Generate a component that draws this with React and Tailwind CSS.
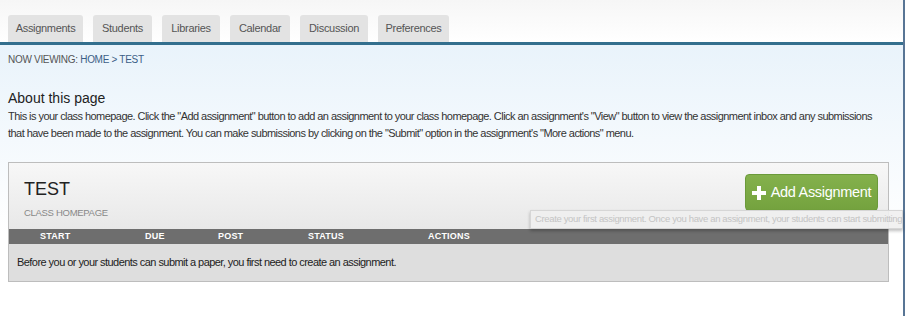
export default function App() {
  const tabs = [
    { label: "Assignments", w: "w-[75px]" },
    { label: "Students", w: "w-[59px]" },
    { label: "Libraries", w: "w-[58px]" },
    { label: "Calendar", w: "w-[60px]" },
    { label: "Discussion", w: "w-[68px]" },
    { label: "Preferences", w: "w-[71px]" },
  ];

  return (
    <div className="w-[908px] h-[316px] flex overflow-hidden bg-white font-['Liberation_Sans',Arial,sans-serif]">
      <div className="w-[903px] flex flex-col">
        {/* tab bar */}
        <div className="h-[45px] pt-[15px] flex items-end bg-gradient-to-b from-[#f6f6f6] to-white border-b-[3px] border-[#336f8e]">
          <div className="flex gap-[10px] pl-[8px] h-[27px]">
            {tabs.map((t) => (
              <div
                key={t.label}
                className={`${t.w} h-full flex items-center justify-center rounded-t-[3px] bg-[#e3e3e3] text-[11px] text-[#555] tracking-[-0.3px]`}
              >
                {t.label}
              </div>
            ))}
          </div>
        </div>

        {/* page body */}
        <div className="flex-1 bg-gradient-to-b from-[#e9f3fb] via-white via-70% to-white px-[8px]">
          <div className="h-[29px] flex items-center text-[10px] text-[#555] tracking-[-0.3px]">
            NOW VIEWING:&nbsp;<span className="text-[#3b5e86]">HOME &gt; TEST</span>
          </div>
          <h2 className="mt-[15px] text-[14px] leading-[18px] text-[#222]">About this page</h2>
          <p className="mt-[1px] text-[11px] leading-[17px] text-[#333] tracking-[-0.55px] pr-[20px]">
            This is your class homepage. Click the "Add assignment" button to add an assignment to your class homepage. Click an assignment's "View" button to view the assignment inbox and any submissions that have been made to the assignment. You can make submissions by clicking on the "Submit" option in the assignment's "More actions" menu.
          </p>

          {/* class panel */}
          <div className="relative mt-[20px] w-[881px] border border-[#bdbdbd] bg-[#dedede]">
            <div className="h-[66px] flex items-start justify-between bg-gradient-to-b from-[#f7f7f7] to-[#e8e8e8] pl-[15px] pr-[10px]">
              <div className="pt-[15px]">
                <div className="text-[18px] leading-[22px] text-[#222]">TEST</div>
                <div className="mt-[6px] text-[9.5px] text-[#888] tracking-[-0.3px]">CLASS HOMEPAGE</div>
              </div>
              <button className="mt-[11px] w-[133px] h-[37px] flex items-center justify-center gap-[5px] rounded-[4px] border border-[#6b9a3a] bg-gradient-to-b from-[#84b14c] to-[#74a23e] text-white text-[14.5px] tracking-[-0.3px]">
                <svg width="14" height="14" viewBox="0 0 14 14">
                  <path d="M5 0h4v5h5v4H9v5H5V9H0V5h5z" fill="#fff" />
                </svg>
                Add Assignment
              </button>
            </div>
            <div className="h-[15px] flex items-center bg-[#6e6e6e] text-white text-[9px] font-bold tracking-[0.2px]">
              <span className="w-[136px] pl-[31px]">START</span>
              <span className="w-[73px]">DUE</span>
              <span className="w-[90px]">POST</span>
              <span className="w-[120px]">STATUS</span>
              <span>ACTIONS</span>
            </div>
            <div className="h-[37px] flex items-center pl-[8px] text-[11px] text-[#222] tracking-[-0.55px]">
              Before you or your students can submit a paper, you first need to create an assignment.
            </div>

            {/* tooltip */}
            <div className="absolute left-[521px] top-[47px] w-[373px] h-[19px] flex items-center pl-[4px] bg-[#f0f0f0]/90 border border-[#d6d6d6] shadow-[0_2px_3px_rgba(0,0,0,0.25)] text-[9.5px] text-[#c4c4c4] tracking-[-0.35px] whitespace-nowrap overflow-hidden">
              Create your first assignment. Once you have an assignment, your students can start submitting
            </div>
          </div>
        </div>
      </div>
      <div className="w-[2px] bg-[#587595]" />
      <div className="flex-1 bg-white" />
    </div>
  );
}
